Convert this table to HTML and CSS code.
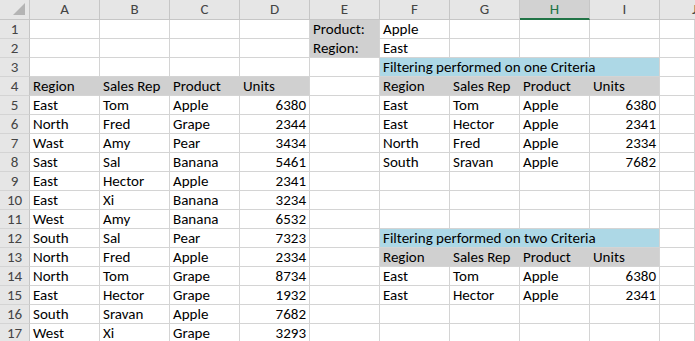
FILE: index.html
```html
<!DOCTYPE html>
<html>
<head>
<meta charset="utf-8">
<link rel="stylesheet" href="styles.css">
</head>
<body>
<div class="sheet">
  <div class="row hdr">
    <div class="corner"><svg width="12" height="12" viewBox="0 0 12 12"><polygon points="12,0 12,12 0,12" fill="#b4b4b4"/></svg></div>
    <div class="ch">A</div><div class="ch">B</div><div class="ch">C</div><div class="ch">D</div><div class="ch">E</div><div class="ch">F</div><div class="ch">G</div><div class="ch sel">H</div><div class="ch">I</div><div class="ch j">J</div>
  </div>
  <div class="row"><div class="rh">1</div><div class="c"></div><div class="c"></div><div class="c"></div><div class="c"></div><div class="c gray gb">Product:</div><div class="c">Apple</div><div class="c"></div><div class="c"></div><div class="c"></div><div class="c j"></div></div>
  <div class="row"><div class="rh">2</div><div class="c"></div><div class="c"></div><div class="c"></div><div class="c"></div><div class="c gray">Region:</div><div class="c">East</div><div class="c"></div><div class="c"></div><div class="c"></div><div class="c j"></div></div>
  <div class="row"><div class="rh">3</div><div class="c"></div><div class="c"></div><div class="c"></div><div class="c"></div><div class="c"></div><div class="c span4 blue">Filtering performed on one Criteria</div><div class="c j"></div></div>
  <div class="row"><div class="rh">4</div><div class="c gray gr">Region</div><div class="c gray gr">Sales Rep</div><div class="c gray gr">Product</div><div class="c gray">Units</div><div class="c"></div><div class="c gray gr">Region</div><div class="c gray gr">Sales Rep</div><div class="c gray gr">Product</div><div class="c gray">Units</div><div class="c j"></div></div>
  <div class="row"><div class="rh">5</div><div class="c">East</div><div class="c">Tom</div><div class="c">Apple</div><div class="c n">6380</div><div class="c"></div><div class="c">East</div><div class="c">Tom</div><div class="c">Apple</div><div class="c n">6380</div><div class="c j"></div></div>
  <div class="row"><div class="rh">6</div><div class="c">North</div><div class="c">Fred</div><div class="c">Grape</div><div class="c n">2344</div><div class="c"></div><div class="c">East</div><div class="c">Hector</div><div class="c">Apple</div><div class="c n">2341</div><div class="c j"></div></div>
  <div class="row"><div class="rh">7</div><div class="c">Wast</div><div class="c">Amy</div><div class="c">Pear</div><div class="c n">3434</div><div class="c"></div><div class="c">North</div><div class="c">Fred</div><div class="c">Apple</div><div class="c n">2334</div><div class="c j"></div></div>
  <div class="row"><div class="rh">8</div><div class="c">Sast</div><div class="c">Sal</div><div class="c">Banana</div><div class="c n">5461</div><div class="c"></div><div class="c">South</div><div class="c">Sravan</div><div class="c">Apple</div><div class="c n">7682</div><div class="c j"></div></div>
  <div class="row"><div class="rh">9</div><div class="c">East</div><div class="c">Hector</div><div class="c">Apple</div><div class="c n">2341</div><div class="c"></div><div class="c"></div><div class="c"></div><div class="c"></div><div class="c"></div><div class="c j"></div></div>
  <div class="row"><div class="rh">10</div><div class="c">East</div><div class="c">Xi</div><div class="c">Banana</div><div class="c n">3234</div><div class="c"></div><div class="c"></div><div class="c"></div><div class="c"></div><div class="c"></div><div class="c j"></div></div>
  <div class="row"><div class="rh">11</div><div class="c">West</div><div class="c">Amy</div><div class="c">Banana</div><div class="c n">6532</div><div class="c"></div><div class="c"></div><div class="c"></div><div class="c"></div><div class="c"></div><div class="c j"></div></div>
  <div class="row"><div class="rh">12</div><div class="c">South</div><div class="c">Sal</div><div class="c">Pear</div><div class="c n">7323</div><div class="c"></div><div class="c span4 blue">Filtering performed on two Criteria</div><div class="c j"></div></div>
  <div class="row"><div class="rh">13</div><div class="c">North</div><div class="c">Fred</div><div class="c">Apple</div><div class="c n">2334</div><div class="c"></div><div class="c gray gr">Region</div><div class="c gray gr">Sales Rep</div><div class="c gray gr">Product</div><div class="c gray">Units</div><div class="c j"></div></div>
  <div class="row"><div class="rh">14</div><div class="c">North</div><div class="c">Tom</div><div class="c">Grape</div><div class="c n">8734</div><div class="c"></div><div class="c">East</div><div class="c">Tom</div><div class="c">Apple</div><div class="c n">6380</div><div class="c j"></div></div>
  <div class="row"><div class="rh">15</div><div class="c">East</div><div class="c">Hector</div><div class="c">Grape</div><div class="c n">1932</div><div class="c"></div><div class="c">East</div><div class="c">Hector</div><div class="c">Apple</div><div class="c n">2341</div><div class="c j"></div></div>
  <div class="row"><div class="rh">16</div><div class="c">South</div><div class="c">Sravan</div><div class="c">Apple</div><div class="c n">7682</div><div class="c"></div><div class="c"></div><div class="c"></div><div class="c"></div><div class="c"></div><div class="c j"></div></div>
  <div class="row"><div class="rh">17</div><div class="c">West</div><div class="c">Xi</div><div class="c">Grape</div><div class="c n">3293</div><div class="c"></div><div class="c"></div><div class="c"></div><div class="c"></div><div class="c"></div><div class="c j"></div></div>
</div>
</body>
</html>
```
FILE: styles.css
```css
html, body {
  margin: 0;
  padding: 0;
  background: #ffffff;
  overflow: hidden;
}
body {
  font-family: Carlito, Calibri, "Liberation Sans", sans-serif;
  font-size: 15px;
  color: #000000;
}
.sheet {
  width: 695px;
}
.row {
  display: flex;
  height: 19px;
}
.row.hdr {
  height: 20px;
}
.corner {
  width: 30px;
  flex: none;
  box-sizing: border-box;
  background: #e6e6e6;
  border-right: 1px solid #c6c6c6;
  border-bottom: 1px solid #c6c6c6;
  display: flex;
  align-items: flex-end;
  justify-content: flex-end;
  padding: 0 4px 4px 0;
}
.ch {
  width: 70px;
  flex: none;
  box-sizing: border-box;
  background: #e6e6e6;
  border-right: 1px solid #c6c6c6;
  border-bottom: 1px solid #c6c6c6;
  text-align: center;
  color: #444444;
  line-height: 19px;
}
.ch.sel {
  background: #d2d2d2;
  color: #217346;
  border-bottom: 2px solid #217346;
}
.rh {
  width: 30px;
  flex: none;
  box-sizing: border-box;
  background: #e6e6e6;
  border-right: 1px solid #c6c6c6;
  border-bottom: 1px solid #d4d4d4;
  text-align: center;
  color: #444444;
  line-height: 19px;
}
.c {
  width: 70px;
  flex: none;
  box-sizing: border-box;
  border-right: 1px solid #d4d4d4;
  border-bottom: 1px solid #d4d4d4;
  padding: 0 3px 0 3px;
  white-space: nowrap;
  overflow: hidden;
  line-height: 19px;
}
.c.j {
  flex: 1;
  width: auto;
}
.n {
  text-align: right;
}
.gray {
  background: #d0d0d0;
}
.gr {
  border-right-color: #d0d0d0;
}
.gb {
  border-bottom-color: #d0d0d0;
}
.blue {
  background: #add8e6;
}
.span4 {
  width: 280px;
}
```
